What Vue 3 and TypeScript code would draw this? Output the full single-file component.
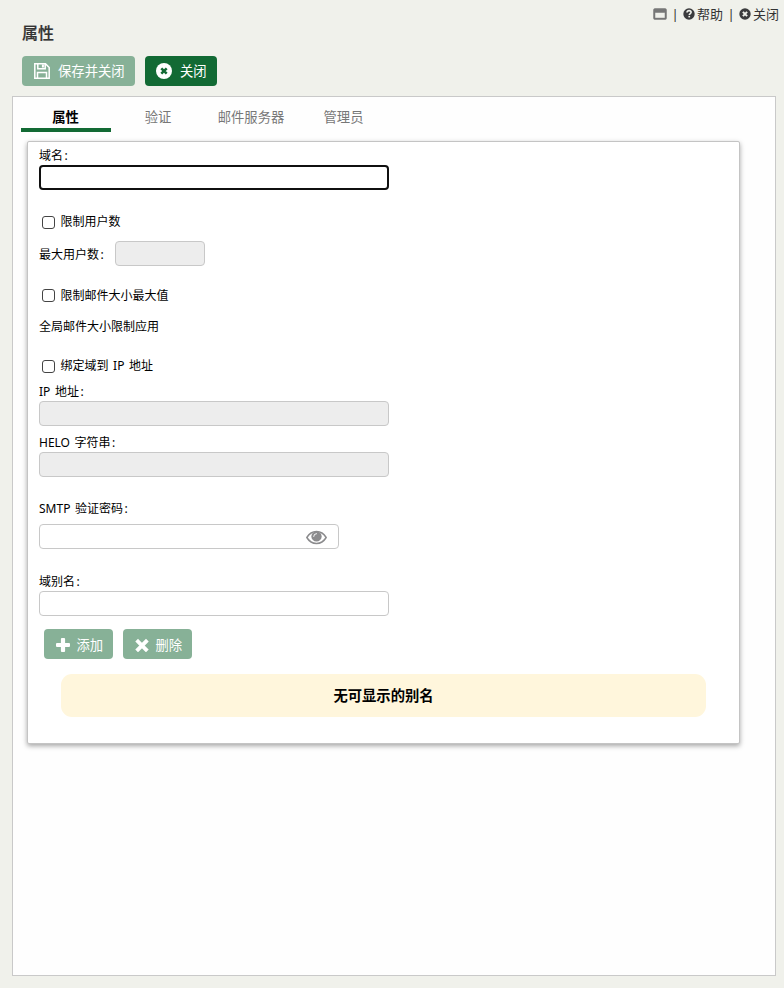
<script setup lang="ts">
import { ref } from 'vue'

const tabs: { label: string; width: number }[] = [
  { label: '属性', width: 89 },
  { label: '验证', width: 94 },
  { label: '邮件服务器', width: 92 },
  { label: '管理员', width: 93 },
]
const active = ref(0)
const domain = ref('')
const limitUsers = ref(false)
const limitSize = ref(false)
const bindIp = ref(false)
const password = ref('')
const alias = ref('')
</script>

<template>
  <div class="page">
    <header class="header">
      <nav class="tools">
        <svg class="window-icon" viewBox="0 0 14 12"><path d="M2 .5h10a1.500 1.500 0 0 1 1.500 1.500v8a1.500 1.500 0 0 1-1.500 1.500H2A1.500 1.500 0 0 1 .5 10V2A1.500 1.500 0 0 1 2 .5zM2 4.500v5.600h10V4.500z" fill="#777" stroke="#777" stroke-width=".5" fill-rule="evenodd" /></svg>
        <span class="sep">|</span>
        <svg class="tool-icon" viewBox="0 0 12 12"><circle cx="6" cy="6" r="5.700" fill="#3b3b3d" /><path d="M4 4.500C4.100 3.200 5 2.600 6.100 2.600c1.200 0 2 .7 2 1.700C8.100 5.600 6.300 5.500 6.300 7" fill="none" stroke="#f0f1eb" stroke-width="1.600" /><path d="M5.400 7.900h1.700v1.500H5.400z" fill="#f0f1eb" /></svg>
        <span class="help">帮助</span>
        <span class="sep">|</span>
        <svg class="tool-icon" viewBox="0 0 12 12"><circle cx="6" cy="6" r="5.700" fill="#3b3b3d" /><path d="M3.900 3.900l4.200 4.200M8.100 3.900L3.900 8.100" stroke="#f0f1eb" stroke-width="2" /></svg>
        <span>关闭</span>
      </nav>
      <h1>属性</h1>
      <div class="actions">
        <button class="btn save" disabled>
          <svg class="save-icon" viewBox="0 0 16 16" fill="none" stroke="#fff" stroke-width="1.500"><path d="M.8.8h10.700l3.700 3.700v10.700H.8z" /><path d="M3.800 1v4.700h7.400V1M3.500 15V9.500h9V15" /><path d="M8.900 1.500v3" stroke-width="2" /></svg>
          <span>保存并关闭</span>
        </button>
        <button class="btn close">
          <svg class="close-icon" viewBox="0 0 16 16"><circle cx="8" cy="8" r="8" fill="#fff" /><path d="M5.300 5.300l5.400 5.400M10.700 5.300l-5.400 5.400" stroke="#126a34" stroke-width="2.500" /></svg>
          <span>关闭</span>
        </button>
      </div>
    </header>

    <main class="panel">
      <div class="tabs">
        <div v-for="(tab, i) in tabs" :key="tab.label" class="tab" :class="{ active: active === i }" :style="{ width: tab.width + 'px' }" @click="active = i">{{ tab.label }}</div>
      </div>

      <section class="card">
        <label class="label">域名<span class="colon">:</span></label>
        <input v-model="domain" class="field focused" type="text" />

        <label class="check users"><input v-model="limitUsers" type="checkbox" />限制用户数</label>
        <div class="max-users">
          <div class="max-label">最大用户数<span class="colon">:</span></div>
          <input class="field small" type="text" disabled />
        </div>

        <label class="check size"><input v-model="limitSize" type="checkbox" /><span>限制邮件大小最大值</span></label>
        <div class="global">全局邮件大小限制应用</div>

        <label class="check bind"><input v-model="bindIp" type="checkbox" />绑定域到 IP 地址</label>
        <label class="label ip">IP 地址<span class="colon">:</span></label>
        <input class="field" type="text" disabled />
        <label class="label helo">HELO 字符串<span class="colon">:</span></label>
        <input class="field" type="text" disabled />

        <label class="label smtp">SMTP 验证密码<span class="colon">:</span></label>
        <div class="password">
          <input v-model="password" type="password" />
          <svg class="eye" viewBox="0 0 20 14"><path d="M.8 7C3 3.300 6.200 1.300 10 1.300S17 3.300 19.200 7C17 10.700 13.800 12.700 10 12.700S3 10.700.8 7z" fill="none" stroke="#8b8b8d" stroke-width="1.400" /><circle cx="10" cy="6" r="4.900" fill="#8b8b8d" /><path d="M7.300 6A2.700 2.700 0 0 1 10 3.300" fill="none" stroke="#fff" stroke-width=".9" stroke-linecap="round" /></svg>
        </div>

        <label class="label alias">域别名<span class="colon">:</span></label>
        <input v-model="alias" class="field" type="text" />
        <div class="alias-actions">
          <button class="btn mini" disabled>
            <svg class="plus" viewBox="0 0 14 14"><path d="M5.900 0h2.200a1 1 0 0 1 1 1v3.900H13a1 1 0 0 1 1 1v2.200a1 1 0 0 1-1 1H9.100V13a1 1 0 0 1-1 1H5.900a1 1 0 0 1-1-1V9.100H1a1 1 0 0 1-1-1V5.900a1 1 0 0 1 1-1h3.900V1a1 1 0 0 1 1-1z" fill="#fff" /></svg>
            <span>添加</span>
          </button>
          <button class="btn mini" disabled>
            <svg class="cross" viewBox="0 0 13 13"><path d="M2.800 3.300l7.400 7.400M10.200 3.300l-7.400 7.400" stroke="#fff" stroke-width="3.600" stroke-linecap="square" /></svg>
            <span>删除</span>
          </button>
        </div>
        <div class="notice">无可显示的别名</div>
      </section>
    </main>
  </div>
</template>

<style>
body {
  margin: 0;
  background: #f0f1eb;
}
</style>

<style scoped>
* {
  box-sizing: border-box;
}
.page {
  width: 784px;
  height: 988px;
  padding: 0 8px 12px 12px;
  display: flex;
  flex-direction: column;
  overflow: hidden;
  background: #f0f1eb;
  color: #000;
  font: 12px/20px "Noto Sans", "Noto Sans CJK SC", sans-serif;
}
.header {
  height: 96px;
  flex: none;
}
.tools {
  height: 22px;
  margin-right: -3px;
  padding-top: 5px;
  display: flex;
  justify-content: flex-end;
  align-items: center;
  font-size: 13px;
  line-height: 18px;
  color: #333;
}
.window-icon {
  width: 14px;
  height: 12px;
  margin-right: 6px;
}
.sep {
  width: 4px;
  margin-right: 6px;
  display: flex;
  justify-content: center;
}
.tool-icon {
  width: 12px;
  height: 12px;
  margin-right: 2px;
}
.help {
  margin-right: 6px;
}
h1 {
  margin: 0 0 11px 10px;
  font-size: 16px;
  line-height: 23px;
  font-weight: 500;
  color: #333;
  -webkit-text-stroke: 0.2px #333;
}
.actions {
  display: flex;
  gap: 10px;
  padding-left: 10px;
}
.btn {
  height: 30px;
  padding: 0;
  border: 0;
  border-radius: 4px;
  background: #126a34;
  color: #fff;
  display: flex;
  align-items: center;
  font: 13.333px/20px "Noto Sans", "Noto Sans CJK SC", sans-serif;
}
.btn:disabled {
  background: #87b197;
}
.save {
  width: 113px;
  padding-left: 12px;
}
.save-icon {
  width: 16px;
  height: 16px;
  margin-right: 8px;
}
.close {
  width: 72px;
  padding-left: 11px;
}
.close-icon {
  width: 16px;
  height: 16px;
  margin-right: 8px;
}
.panel {
  flex: 1;
  background: #fefefe;
  border: 1px solid #c9c9c9;
}
.tabs {
  display: flex;
  padding-left: 8px;
  height: 35px;
}
.tab {
  height: 35px;
  padding-top: 1px;
  text-align: center;
  font-size: 13.333px;
  line-height: 38px;
  color: #777;
}
.tab.active {
  box-sizing: content-box;
  height: 30px;
  padding-right: 1px;
  color: #000;
  font-weight: 700;
  border-bottom: 4px solid #126a34;
}
.card {
  width: 713px;
  height: 603px;
  margin: 9px 0 0 14px;
  padding: 3px 11px 0;
  background: #fff;
  border: 1px solid #c4c4c4;
  border-radius: 2px;
  box-shadow: 0 2px 5px rgba(0, 0, 0, 0.35);
  word-spacing: 1.5px;
}
.label {
  display: block;
  height: 20px;
  line-height: 22px;
}
.colon {
  margin-left: 1.5px;
}
.field {
  display: block;
  width: 350px;
  height: 25px;
  margin: 0;
  padding: 0 6px;
  border: 1px solid #c8c8c8;
  border-radius: 4px;
  background: #fff;
  outline: none;
}
.field:disabled {
  background: #ededed;
}
.focused {
  border: 2px solid #101010;
}
.small {
  width: 90px;
}
.check {
  display: flex;
  align-items: center;
  height: 20px;
}
.check input {
  width: 13px;
  height: 13px;
  margin: 1px 6px 0 2.5px;
  appearance: none;
  border: 1.5px solid #444;
  border-radius: 3px;
  background: #fff;
}
.users {
  margin-top: 22px;
}
.max-users {
  display: flex;
  align-items: center;
  margin-top: 9px;
}
.max-label {
  width: 76px;
  padding-top: 2px;
}
.size {
  margin-top: 19px;
}
.size span {
  padding-top: 2px;
}
.global {
  height: 20px;
  margin-top: 11px;
  line-height: 22px;
}
.bind {
  margin-top: 20px;
}
.ip {
  margin-top: 5px;
}
.helo {
  margin-top: 6px;
}
.smtp {
  margin-top: 21px;
}
.password {
  width: 300px;
  height: 25px;
  margin-top: 6px;
  padding: 1px 11px 0 0;
  display: flex;
  align-items: center;
  border: 1px solid #c8c8c8;
  border-radius: 4px;
}
.password input {
  flex: 1;
  min-width: 0;
  height: 20px;
  border: 0;
  outline: none;
  background: transparent;
}
.eye {
  width: 21px;
  height: 15px;
}
.alias {
  margin-top: 22px;
}
.alias-actions {
  display: flex;
  gap: 10px;
  margin: 13px 0 15px 5px;
}
.mini {
  width: 69px;
  padding: 2px 0 0 12px;
}
.plus,
.cross {
  width: 14px;
  height: 14px;
  margin-right: 6.5px;
}
.notice {
  width: 645px;
  height: 43px;
  margin-left: 22px;
  border-radius: 11px;
  background: #fff6dc;
  text-align: center;
  font-size: 14.3px;
  font-weight: 700;
  line-height: 44px;
}
</style>
